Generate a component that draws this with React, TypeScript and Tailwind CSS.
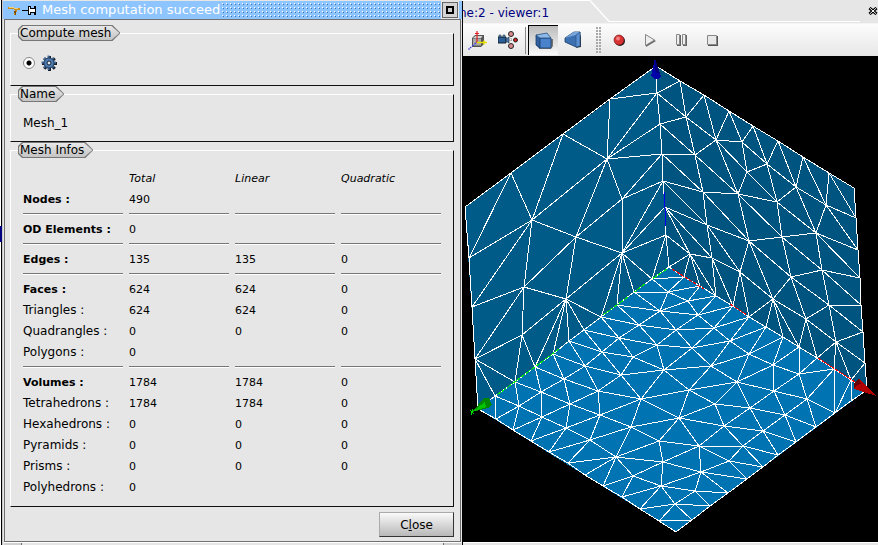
import React from "react";

type Row = { label: string; values: string[]; bold?: boolean; rule?: boolean };

const ROWS: Row[] = [
  { label: "Nodes :", values: ["490", "", ""], bold: true, rule: true },
  { label: "OD Elements :", values: ["0", "", ""], bold: true, rule: true },
  { label: "Edges :", values: ["135", "135", "0"], bold: true, rule: true },
  { label: "Faces :", values: ["624", "624", "0"], bold: true },
  { label: "Triangles :", values: ["624", "624", "0"] },
  { label: "Quadrangles :", values: ["0", "0", "0"] },
  { label: "Polygons :", values: ["0", "", ""], rule: true },
  { label: "Volumes :", values: ["1784", "1784", "0"], bold: true },
  { label: "Tetrahedrons :", values: ["1784", "1784", "0"] },
  { label: "Hexahedrons :", values: ["0", "0", "0"] },
  { label: "Pyramids :", values: ["0", "0", "0"] },
  { label: "Prisms :", values: ["0", "0", "0"] },
  { label: "Polyhedrons :", values: ["0", "", ""] },
];

/* Mesh nodes, keyed by name. */
const NODES: Record<string, [number, number]> = {
  O: [669, 267], T: [656, 66],
  // vertical axis
  Z1: [657, 93], Z2: [660, 124], Z3: [662, 154], Z4: [663, 181], Z5: [665, 207], Z6: [666, 235],
  // left axis
  Y1: [652, 279], Y2: [634, 292], Y3: [617, 305], Y4: [601, 317], Y5: [584, 330], Y6: [569, 341],
  Y7: [553, 354], Y8: [535, 367], Y9: [515, 382], Y10: [495, 396], YE: [478, 409],
  // right axis
  X1: [684, 277], X2: [700, 286], X3: [716, 296], X4: [733, 306], X5: [749, 317], X6: [766, 327],
  X7: [783, 337], X8: [799, 347], X9: [817, 358], X10: [834, 369], X11: [851, 380], XE: [867, 390],
  // left wall
  L1: [610, 99], L2: [563, 134], L3: [511, 173], L4: [465, 207], L5: [469, 258], L6: [472, 307], L7: [475, 359],
  LA: [607, 159], LB: [622, 199], LC: [532, 220], LD: [576, 237], LE: [622, 253], LF: [524, 287], LG: [566, 299], LH: [522, 335],
  // right wall
  R1: [680, 81], R2: [704, 95], R3: [729, 111], R4: [753, 126], R5: [778, 141], R6: [803, 157], R7: [829, 173],
  R8: [854, 188], R9: [856, 218], R10: [858, 250], R11: [860, 278], R12: [861, 305], R13: [863, 332], R14: [865, 363],
  a: [686, 117], b: [716, 140], c: [742, 142], d: [695, 155], e: [747, 172], f: [767, 164], g: [703, 192], h: [738, 194],
  i: [796, 187], j: [777, 202], k: [826, 205], l: [707, 225], m: [749, 241], n: [782, 237], o: [816, 233], p: [690, 254],
  q: [712, 258], r: [740, 272], s: [791, 277], t: [822, 270], u: [773, 299], v: [829, 305], w: [806, 319], x: [836, 342],
  // floor outline
  P1: [496, 419], P2: [513, 430], P3: [531, 441], P4: [549, 452], P5: [568, 463], P6: [585, 475], P7: [603, 486],
  P8: [622, 497], P9: [640, 509], P10: [659, 521], B: [676, 532],
  Q1: [692, 520], Q2: [710, 506], Q3: [728, 493], Q4: [747, 479], Q5: [763, 467], Q6: [778, 455], Q7: [796, 442],
  Q8: [816, 427], Q9: [835, 413], Q10: [851, 401],
  // floor
  A1: [668, 292], A2: [660, 311], A3: [639, 325], A4: [676, 330], A5: [619, 338], A6: [657, 345], A7: [602, 352],
  A8: [633, 357], A9: [585, 366], A10: [621, 375], A11: [664, 370], A12: [564, 379], A13: [541, 392], A14: [598, 391],
  A15: [641, 399], A16: [519, 406], A17: [570, 404], A18: [542, 417], A19: [600, 415], A20: [566, 428], A21: [590, 440],
  A22: [631, 427], A23: [659, 441], A24: [679, 418], A25: [616, 457], A26: [663, 462], A27: [633, 476], A28: [661, 486], A29: [675, 504],
  B2: [688, 301], B3: [698, 315], B5: [714, 328], B6: [730, 341], B7: [692, 348], B8: [749, 354], B9: [773, 365], B10: [711, 366],
  C1: [799, 374], C2: [737, 382], C3: [689, 390], C4: [774, 391], C5: [807, 399], C6: [715, 404], C7: [750, 408], C8: [785, 415],
  C9: [724, 426], C10: [763, 431], C11: [699, 446], C12: [743, 446], C13: [729, 461], C14: [701, 472], C15: [695, 491],
};

/* Each entry is a fan: the first node is joined to every node that follows it. */
const FANS = `
L1 Z1 LA|L2 LA LC|LA Z1 Z2 Z3 LC LD LB|LB Z3 Z4 LD LE|L3 LC L5|LC L5 L6 LF LD|LD LE LF LG
LE Z6 LG Y4 Y3 Y2 Y1 Z4 Z5|Z6 Y1|LF L6 LH LG L7|LH L7 LG Y9 Y8|LG Y8 Y7 Y6 Y5 Y4|L7 Y9 Y10
Z1 R1 a|a R1 R2 b d Z2|d Z2 Z3|g Z3 Z4|Z4 l|Z5 l p q|Z6 p|O p|b R2 R3 c d h e|c R3 R4 e f|d g h
e f h j|f R4 R5 i j|g h l m|h j m n|i R5 R6 j k o|j n o|k R6 R7 o R9 R10|R7 R9|o R10 R11 t n
t R11|n s t|m n l r s u|s t u v w|t v R12|u r w X5 X6 X7 X8|r l q X4 X5|q l p X3 X4|p X1 X2 X3
v R12 w x R13|w X8 X9 x|x R13 R14 X9 X10 X11|R14 X11
Y1 X1 A1|A1 Y2 X1 A2 B2 X2|A2 Y2 Y3 B2 B3 A3 A4|B2 X2 X3 B3|B3 X3 X4 A4 B5|A3 Y3 Y4 A4 A5 A6
A5 Y4 Y5 A7 A6 A8|A7 Y5 Y6 A8 A9 A10|A4 B5 B7 A6|B5 X4 X5 B6 B7|B6 X5 X6 B7 B8 B10
B8 X6 X7 B10 C2 B9|B9 X7 X8 C1 C2 C4|C1 X8 X9 X10 C4 C5|A6 A8 A11 B7|A9 Y6 Y7 A12 A10 A14
A12 Y7 Y8 A13 A14 A17|A13 Y8 Y9 A16 A17 A18|A8 A10 A11|A10 A14 A15 A11|A16 Y9 Y10 P1 P2 A18|Y10 P1
A18 P2 P3 A20 A17|A17 A14 A19 A20|A20 P3 P4 A21 A19|A19 A14 A15 A21 A22|A15 A14 A22 A11 A24 C3
A11 B7 B10 C3|B7 B10|B10 C2 C3|C2 C3 C6 C7 C4|C4 C5 C7 C8|C5 Q8 X10 Q9|Q9 X10 X11|X11 Q10
C3 C6 A24|C6 A24 C7 C9|C7 C9 C10 C8|C8 C5 Q8 Q7 C10|C10 Q7 Q6 C9 C12|C12 C9 Q6 Q5 C13 C11
C9 C11 A24|A24 C11 A22 A23|A23 A22 A26 A25 C11|C11 A26 C14 C13|C13 Q5 Q4 C14|C14 Q4 Q3 C15 A26 A28
C15 A28 Q3 Q2 A29|A29 Q2 Q1 A28 P9 P10|P10 Q1|A28 P9 P8 A27 A26|A27 P8 P7 A25 A26
A25 P7 P6 P5 A26 A22 A21|A21 P5 P4 A22`;

const CHAINS = [
  "T Z1 Z2 Z3 Z4 Z5 Z6 O",
  "O Y1 Y2 Y3 Y4 Y5 Y6 Y7 Y8 Y9 Y10 YE",
  "O X1 X2 X3 X4 X5 X6 X7 X8 X9 X10 X11 XE",
  "T L1 L2 L3 L4 L5 L6 L7 YE P1 P2 P3 P4 P5 P6 P7 P8 P9 P10 B Q1 Q2 Q3 Q4 Q5 Q6 Q7 Q8 Q9 Q10 XE",
  "T R1 R2 R3 R4 R5 R6 R7 R8 R9 R10 R11 R12 R13 R14 XE",
];

const at = (name: string) => NODES[name].join(" ");

const meshPath = [
  ...CHAINS.map((chain) => "M" + chain.split(" ").map(at).join("L")),
  ...FANS.trim()
    .split(/[|\n]/)
    .map((fan) => {
      const [hub, ...ends] = fan.trim().split(" ");
      return ends.map((end) => `M${at(hub)}L${at(end)}`).join("");
    }),
].join("");

function MeshView() {
  return (
    <svg
      viewBox="463 56 415 486"
      className="block w-full"
      role="img"
      aria-label="Tetrahedral mesh of a cube"
      shapeRendering="crispEdges"
    >
      <polygon points="656,66 465,207 478,409 669,267" fill="#005b88" />
      <polygon points="656,66 854,188 867,390 669,267" fill="#005580" />
      <polygon points="669,267 478,409 676,532 867,390" fill="#0074b3" />
      <path d={meshPath} fill="none" stroke="#fff" strokeWidth="1" />
      <path d="M664 192L665 208L666 226" fill="none" stroke="#0000f0" strokeWidth="1" />
      <g fill="none" stroke="#00f000" strokeWidth="1" strokeDasharray="5 1">
        <path d="M667 269L652 279M645 284L634 292M628 297L603 315" />
        <path d="M559 349L497 395" />
      </g>
      <g fill="none" stroke="#f00000" strokeWidth="1" strokeDasharray="4 1">
        <path d="M672 269L704 289M730 304L747 315M818 358L855 382" />
      </g>
      <polygon points="655,58 651,76 654,79 658,79 661,76" fill="#0000a8" />
      <polygon points="655,58 655,71 660,74" fill="#000078" />
      <polygon points="472,412 484,398 489,398 492,405 488,408" fill="#008600" />
      <polygon points="472,412 485,402 486,407" fill="#00c400" />
      <path d="M470 410L474 414M471 415L473 409" stroke="#00e000" />
      <polygon points="877,396 859,379 854,383 854,389 860,391" fill="#b00000" />
      <polygon points="859,379 854,383 854,389 857,385 861,384" fill="#6c0000" />
    </svg>
  );
}

function GroupBox({ title, className, children }: { title: string; className: string; children: React.ReactNode }) {
  return (
    <fieldset className="min-w-0 border border-t-white border-r-[#111] border-b-[#111] border-l-white">
      <legend className="ml-[7px] h-4 bg-[#777] p-px text-xs [clip-path:polygon(4px_0,calc(100%-8px)_0,100%_50%,calc(100%-8px)_100%,4px_100%,0_calc(100%-4px),0_4px)]">
        <span className="block h-[14px] bg-linear-to-b from-[#e8e8e8] to-[#c4c4c4] pr-2 pl-px leading-[14px] [clip-path:polygon(4px_0,calc(100%-8px)_0,100%_50%,calc(100%-8px)_100%,4px_100%,0_calc(100%-4px),0_4px)]">
          {title}
        </span>
      </legend>
      <div className={className}>{children}</div>
    </fieldset>
  );
}

function GearIcon() {
  return (
    <svg viewBox="0 0 16 16" className="size-4" aria-hidden="true">
      <g stroke="#14202e" strokeWidth="3">
        <path d="M8.500 1V16M1 8.500H16M3.200 3.200L13.800 13.800M13.800 3.200L3.200 13.800" />
      </g>
      <g stroke="#456c9a" strokeWidth="2">
        <path d="M7.500 .5V15M.5 7.500H15M3 3L12.500 12.500M12.500 3L3 12.500" />
      </g>
      <circle cx="8" cy="8" r="5" fill="#4f7db3" stroke="#26415f" />
      <circle cx="8" cy="8" r="2" fill="#dfe9f2" stroke="#10202f" />
    </svg>
  );
}

function MeshDialog() {
  return (
    <section className="z-10 flex w-[459px] shrink-0 flex-col bg-[#e6e6e6]" aria-label="Mesh computation succeed">
      <header className="flex h-[19px] items-center border-t border-[#e6e6e6] bg-[#8ec5ff] pr-1 pl-[5px]">
        <svg viewBox="0 0 30 12" className="h-3 w-[30px]" aria-hidden="true" shapeRendering="crispEdges">
          <path d="M0 3h4l2 1h6v2H9l-1 5H6l1-5-3-1H0z" fill="#c98a1c" />
          <path d="M1 3h3l2 1h4" stroke="#f2d27a" fill="none" />
          <path d="M6 7l1 4h1V7z" fill="#7a4a08" />
          <path d="M14 6h6" stroke="#000" strokeWidth="1" />
          <path d="M20 2h2v2h4V2h1v8h-1V8h-4v2h-2z" fill="#fff" stroke="#000" />
        </svg>
        <h1 className="ml-1 text-[13px] leading-4 text-white">Mesh computation succeed</h1>
        <svg className="mx-[2px] h-4 flex-1" aria-hidden="true" shapeRendering="crispEdges">
          <defs>
            <pattern id="grip" width="4" height="4" patternUnits="userSpaceOnUse">
              <rect x="0" y="1" width="1" height="1" fill="#fff" />
              <rect x="1" y="2" width="1" height="1" fill="#3c73b4" />
            </pattern>
          </defs>
          <rect width="100%" height="100%" fill="url(#grip)" />
        </svg>
        <button
          type="button"
          aria-label="Maximize"
          className="flex size-4 items-center justify-center border border-[#666] bg-[#d4d4d4] shadow-[0_0_0_1px_#e6e6e6]"
        >
          <span className="size-2 border-2 border-black bg-[#ccc]" />
        </button>
      </header>

      <div className="mx-px flex flex-1 flex-col border border-[#707070] pt-[5px] pr-[6px] pb-1 pl-[5px]">
        <GroupBox title="Compute mesh" className="flex h-11 items-center pl-3">
          <div className="flex items-center gap-[6px]">
            <input
              id="algo"
              type="radio"
              name="algo"
              defaultChecked
              aria-label="Compute mesh"
              className="size-3 appearance-none rounded-full border border-[#888] bg-white bg-[radial-gradient(circle,#000_2px,transparent_3px)]"
            />
            <label htmlFor="algo">
              <GearIcon />
            </label>
          </div>
        </GroupBox>
        <GroupBox title="Name" className="flex h-[39px] items-center pt-[3px] pl-3">
          <output className="text-xs">Mesh_1</output>
        </GroupBox>
        <GroupBox title="Mesh Infos" className="px-[6px] pt-[7px] pb-[5px]">
          <table className="w-[430px] table-fixed border-separate border-spacing-[6px] leading-[15px]">
            <thead>
              <tr className="h-[15px] text-left italic">
                <td className="p-0" />
                {["Total", "Linear", "Quadratic"].map((name) => (
                  <th key={name} scope="col" className="p-0 font-normal">
                    {name}
                  </th>
                ))}
              </tr>
            </thead>
            <tbody>
              {ROWS.map((row) => (
                <React.Fragment key={row.label}>
                  <tr className="h-[15px]">
                    <th
                      scope="row"
                      className={`p-0 text-left whitespace-nowrap ${
                        row.bold ? "font-bold" : "text-xs leading-[15px] font-normal"
                      }`}
                    >
                      {row.label}
                    </th>
                    {row.values.map((value, index) => (
                      <td key={index} className="p-0">
                        {value}
                      </td>
                    ))}
                  </tr>
                  {row.rule && (
                    <tr className="h-[3px]" aria-hidden="true">
                      {[0, 1, 2, 3].map((index) => (
                        <td key={index} className="p-0">
                          <div className="h-[3px]">
                            <div className="h-[2px] border-t border-b border-t-[#777] border-b-white" />
                          </div>
                        </td>
                      ))}
                    </tr>
                  )}
                </React.Fragment>
              ))}
            </tbody>
          </table>
        </GroupBox>
        <div className="flex justify-end pt-[5px]">
          <button
            type="button"
            className="h-[25px] w-[75px] border border-t-[#aaa] border-r-[#333] border-b-[#333] border-l-[#aaa] bg-linear-to-b from-[#fafafa] to-[#b8b8b8] text-xs"
          >
            C<span className="underline">l</span>ose
          </button>
        </div>
      </div>
      <div className="mx-px flex h-[3px] border-t border-white">
        <div className="w-[18px] border-r border-[#707070] bg-[#d0d0d0]" />
        <div className="flex-1" />
        <div className="w-[18px] border-l border-[#707070] bg-[#d0d0d0]" />
      </div>
    </section>
  );
}

function ToolButton({ label, pressed, children }: { label: string; pressed?: boolean; children: React.ReactNode }) {
  return (
    <button
      type="button"
      aria-label={label}
      aria-pressed={pressed}
      className={`flex h-[30px] w-[30px] shrink-0 items-center justify-center ${
        pressed ? "border-t border-l border-black bg-linear-to-b from-[#bcbcbc] to-[#fafafa]" : ""
      }`}
    >
      <svg viewBox="0 0 20 20" className="size-5">
        {children}
      </svg>
    </button>
  );
}

function Toolbar() {
  return (
    <div
      role="toolbar"
      aria-label="Viewer"
      className="flex h-[33px] items-center overflow-hidden border-t border-[#f4f4f4] bg-linear-to-b from-[#fdfdfd] to-[#e6e6e6]"
    >
      <ToolButton label="Dump trihedron">
        <path d="M4 8l3-3h9v9l-3 3H4z" fill="#555" />
        <path d="M5 8.500h8v7H5z" fill="#aaa" />
        <path d="M5 8l2.500-2h7L13 8z" fill="#d4d4d4" />
        <path d="M9 1v12M7 3.500h4" stroke="#e02020" fill="none" strokeWidth="1.200" />
        <path d="M9 12.500h10M16 10.500v4" stroke="#e6e000" fill="none" strokeWidth="1.500" />
        <path d="M8 13l-6 5M0 19h2" stroke="#4040d8" fill="none" strokeWidth="1.200" strokeDasharray="2 1" />
      </ToolButton>
      <ToolButton label="Camera mode">
        <path d="M0 7h8v6H0z" fill="#2c5f96" stroke="#123" />
        <path d="M1 5h2v2H1zM5 5h2v2H5z" fill="#6ba0d6" stroke="#234" strokeWidth=".6" />
        <path d="M8 9l3-2v6l-3-2z" fill="#4d7fb5" stroke="#123" strokeWidth=".6" />
        <g stroke="#222">
          <circle cx="13" cy="4" r="2.500" fill="#d98a90" />
          <circle cx="17.500" cy="10" r="2" fill="#c22" />
          <circle cx="13" cy="16" r="2.500" fill="#d98a90" />
        </g>
        <path d="M13 8v4M11 10h4" stroke="#888" strokeDasharray="1 1" />
      </ToolButton>
      <div className="mx-[2px] h-[27px] w-px bg-[#888]" />
      <ToolButton label="Orthogonal projection" pressed>
        <path d="M4 9l1 9h12l2-3V8z" fill="#2a2a2a" opacity=".6" />
        <path d="M2 4l4 3v11l-4-4z" fill="#2f5f9f" />
        <path d="M6 7h11v10H6z" fill="#4a83cc" stroke="#173a68" strokeWidth=".8" />
        <path d="M2 4l11-2 4 5H6z" fill="#8db8e8" stroke="#274f82" strokeWidth=".8" />
        <path d="M2 4v10l4 3" fill="none" stroke="#173a68" strokeWidth=".8" />
      </ToolButton>
      <ToolButton label="Perspective projection">
        <path d="M13 18l5-1V4" fill="#333" />
        <path d="M2 8l9-6 6 0v14l-4 1-11-5z" fill="#3c70b0" stroke="#173a68" strokeWidth=".8" />
        <path d="M2 8l9-6 6 0-4 3z" fill="#79a6dc" />
        <path d="M13 5l4-3v14l-4 1z" fill="#5b8fd0" stroke="#274f82" strokeWidth=".6" />
      </ToolButton>
      <svg className="mr-[2px] ml-2 h-[27px] w-[6px] shrink-0" aria-hidden="true" shapeRendering="crispEdges">
        <defs>
          <pattern id="handle" width="3" height="3" patternUnits="userSpaceOnUse">
            <rect width="2" height="2" fill="#a8a8a8" />
          </pattern>
        </defs>
        <rect width="6" height="27" fill="url(#handle)" />
      </svg>
      <div className="flex gap-px">
        <ToolButton label="Start recording">
          <circle cx="11" cy="11" r="5" fill="#222" />
          <circle cx="10" cy="10" r="5" fill="#d93232" stroke="#701010" strokeWidth=".6" />
          <circle cx="9" cy="8.500" r="2" fill="#f28080" />
        </ToolButton>
        <ToolButton label="Play recording">
          <path d="M6 5l10 6-10 6z" fill="#666" />
          <path d="M5.500 4.500l9 5.500-9 5.500z" fill="#eee" stroke="#888" />
        </ToolButton>
        <ToolButton label="Pause recording">
          <path d="M6 5h4v11H6zM12 5h4v11h-4z" fill="#666" />
          <path d="M5.500 4.500h3v10h-3zM11.500 4.500h3v10h-3z" fill="#eee" stroke="#888" />
        </ToolButton>
        <ToolButton label="Stop recording">
          <path d="M6 6h10v10H6z" fill="#555" />
          <path d="M5.500 5.500h9v9h-9z" fill="#e8e8e8" stroke="#888" />
        </ToolButton>
      </div>
    </div>
  );
}

export default function App() {
  return (
    <main className="flex min-h-screen overflow-hidden bg-[#e6e6e6] font-['DejaVu_Sans','Liberation_Sans',sans-serif] text-[11px] text-black">
      <div className="flex w-[3px] shrink-0 flex-col border-r border-[#c8c8c8] bg-[linear-gradient(to_right,#fff_1px,#000_1px,#000_2px)]">
        <div className="mt-[226px] h-4 bg-[#000080]" />
      </div>
      <MeshDialog />
      <section className="flex min-w-0 flex-1 flex-col border-l border-black" aria-label="Viewer">
        <div className="flex h-[23px] items-stretch pb-px">
          <div className="-ml-1 flex w-[131px] items-center border-t border-white pt-[2px] text-xs whitespace-nowrap text-[#000080]">
            ne:2 - viewer:1
          </div>
          <svg viewBox="0 0 20 22" className="w-5 shrink-0" aria-hidden="true">
            <path d="M0 .5L19 21.500H20" fill="none" stroke="#fff" strokeWidth="1.500" />
          </svg>
          <div className="flex-1 border-b border-white" />
          <button type="button" aria-label="Close viewer" className="flex w-[18px] items-center justify-end">
            <svg viewBox="0 0 10 8" className="h-2 w-[10px]">
              <path d="M1.500 1L8.500 7M8.500 1L1.500 7" fill="none" stroke="#000" strokeWidth="3" />
              <path d="M2 1.300L8 6.700M8 1.300L2 6.700" fill="none" stroke="#fff" strokeWidth="1" />
            </svg>
          </button>
        </div>
        <Toolbar />
        <div className="flex-1 bg-black">
          <MeshView />
        </div>
        <div className="h-[3px] border-t border-white bg-[#e6e6e6]" />
      </section>
    </main>
  );
}
